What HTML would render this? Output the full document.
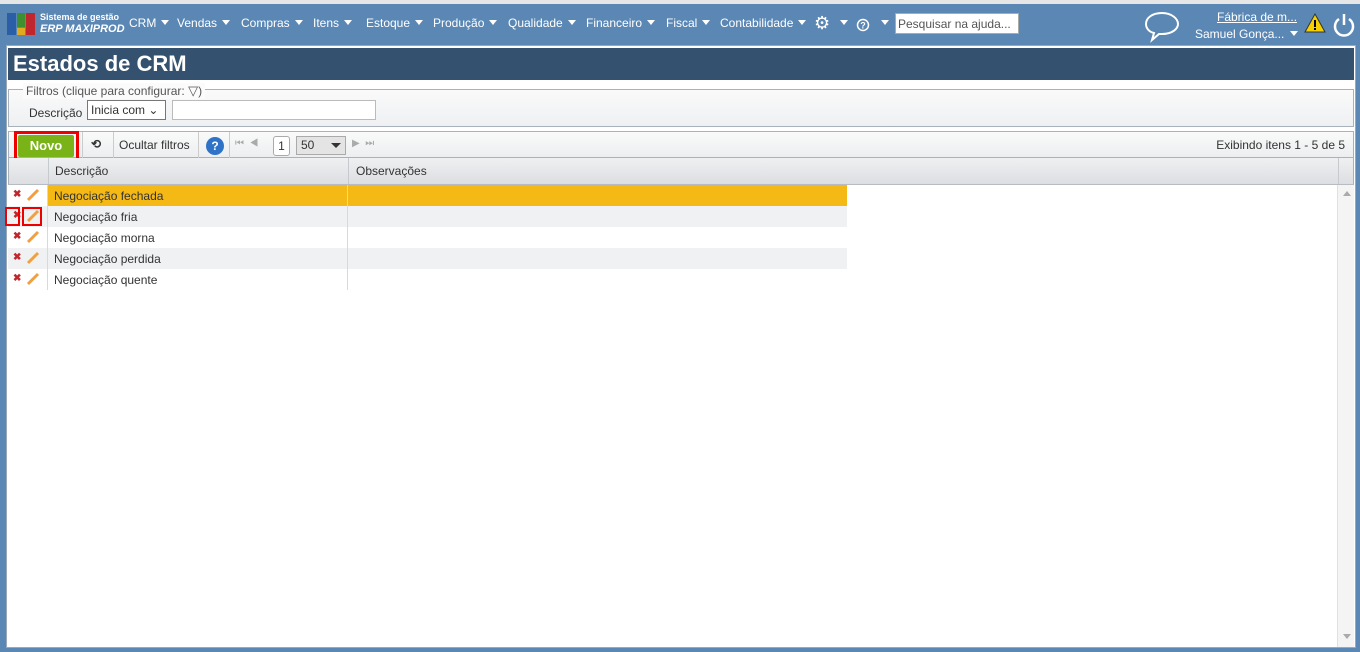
<!DOCTYPE html>
<html><head><meta charset="utf-8"><style>
*{box-sizing:border-box;margin:0;padding:0}
body{width:1360px;height:652px;background:#5b87b4;font-family:"Liberation Sans",sans-serif;font-size:12px;color:#333;position:relative;overflow:hidden}
.top{position:absolute;left:0;top:0;width:1360px;height:4px;background:#e6e6e6}
.bar{position:absolute;left:0;top:4px;width:1360px;height:40px;background:#5b87b4;color:#fff}
.n{position:absolute;top:12px;font-size:12px;color:#fff;white-space:nowrap}
.tri{display:inline-block;width:0;height:0;border-left:4px solid transparent;border-right:4px solid transparent;border-top:5px solid #fff;vertical-align:2px;margin-left:5px}
.panel{position:absolute;left:6px;top:45px;width:1350px;height:603px;background:#fff;border:1px solid #9aa8b8}
.title{position:absolute;left:1px;top:2px;width:1346px;height:32px;background:#34526f;color:#fff;font-weight:bold;font-size:22px;padding:3px 5px}
.fs{position:absolute;left:1px;top:43px;width:1346px;height:38px;border:1px solid #a9b1bb;background:linear-gradient(#fafafa,#eef0f2)}
.tb{position:absolute;left:1px;top:85px;width:1346px;height:27px;border:1px solid #a9b1bb;background:linear-gradient(#fafafa,#eceef0)}
.gh{position:absolute;left:1px;top:112px;width:1346px;height:27px;background:linear-gradient(#eef0f2,#dcdee1);border-bottom:1px solid #b7bcc2;border-left:1px solid #a9b1bb;border-right:1px solid #a9b1bb}
.row{position:absolute;left:1px;width:839px;height:21px}
.row .t{position:absolute;left:46px;top:4px}
.x{position:absolute;left:5px;top:4px;color:#c0262d;font-weight:bold;font-size:10px}
.p{position:absolute;left:18px;top:3px}
.vl{position:absolute;width:1px;background:#d6d9dd}
</style></head><body>
<div class="top"></div>
<div class="bar">
 <div style="position:absolute;left:7px;top:9px;width:9px;height:22px;background:#2a5fa8"></div>
 <div style="position:absolute;left:17px;top:9px;width:8px;height:14px;background:#3e8f2f"></div>
 <div style="position:absolute;left:17px;top:24px;width:8px;height:7px;background:#e0a91e"></div>
 <div style="position:absolute;left:26px;top:9px;width:9px;height:22px;background:#c0262d"></div>
 <div style="position:absolute;left:40px;top:8px;font-size:9px;font-weight:bold">Sistema de gestão</div>
 <div style="position:absolute;left:40px;top:19px;font-size:11px;font-weight:bold;font-style:italic">ERP MAXIPROD</div>
 <span class="n" style="left:129px">CRM<i class="tri"></i></span>
 <span class="n" style="left:177px">Vendas<i class="tri"></i></span>
 <span class="n" style="left:241px">Compras<i class="tri"></i></span>
 <span class="n" style="left:313px">Itens<i class="tri"></i></span>
 <span class="n" style="left:366px">Estoque<i class="tri"></i></span>
 <span class="n" style="left:433px">Produção<i class="tri"></i></span>
 <span class="n" style="left:508px">Qualidade<i class="tri"></i></span>
 <span class="n" style="left:586px">Financeiro<i class="tri"></i></span>
 <span class="n" style="left:666px">Fiscal<i class="tri"></i></span>
 <span class="n" style="left:720px">Contabilidade<i class="tri"></i></span>
 <span class="n" style="left:814px;top:9px;font-size:18px">⚙</span><i class="tri" style="position:absolute;left:835px;top:16px"></i>
 <svg style="position:absolute;left:856px;top:14px" width="14" height="14"><circle cx="7" cy="7" r="5.5" fill="none" stroke="#fff" stroke-width="1.5"/><text x="7" y="10.5" font-size="9" font-weight="bold" fill="#fff" text-anchor="middle" font-family="Liberation Sans">?</text></svg>
 <i class="tri" style="position:absolute;left:876px;top:16px"></i>
 <div style="position:absolute;left:895px;top:9px;width:124px;height:21px;background:#fff;border:1px solid #aaa;color:#555;padding:3px 2px;font-size:12px">Pesquisar na ajuda...</div>
 <svg style="position:absolute;left:1143px;top:6px" width="38" height="34" viewBox="0 0 38 34"><path d="M19 3C9 3 3 8 3 14c0 4 3 8 8 9l-2 7 7-6c1 0 2 0 3 0 10 0 16-5 16-10S29 3 19 3z" fill="none" stroke="#fff" stroke-width="2"/></svg>
 <div style="position:absolute;left:1217px;top:6px;text-decoration:underline">Fábrica de m...</div>
 <div style="position:absolute;left:1195px;top:23px">Samuel Gonça...<i class="tri" style="margin-left:6px"></i></div>
 <svg style="position:absolute;left:1304px;top:8px" width="22" height="22"><path d="M11 2L21 20H1z" fill="#f5d000" stroke="#333" stroke-width="1"/><rect x="10" y="8" width="2" height="7" fill="#000"/><rect x="10" y="16" width="2" height="2" fill="#000"/></svg>
 <svg style="position:absolute;left:1332px;top:8px" width="24" height="26"><path d="M7 7a9 9 0 1 0 10 0" fill="none" stroke="#fff" stroke-width="2.5"/><path d="M12 2v11" stroke="#fff" stroke-width="2.5"/></svg>
</div>
<div class="panel">
 <div class="title">Estados de CRM</div>
 <div class="fs">
  <div style="position:absolute;left:14px;top:-7px;background:#fbfbfb;padding:0 3px;color:#555">Filtros (clique para configurar: <span style="font-size:13px">▽</span>)</div>
  <div style="position:absolute;left:20px;top:16px">Descrição</div>
  <div style="position:absolute;left:78px;top:10px;width:79px;height:20px;border:1px solid #777;background:#fff;padding:2px 3px">Inicia com ⌄</div>
  <div style="position:absolute;left:163px;top:10px;width:204px;height:20px;border:1px solid #bbb;background:#fff"></div>
 </div>
 <div class="tb">
  <div style="position:absolute;left:5px;top:-1px;width:65px;height:31px;border:3px solid #e00"></div>
  <div style="position:absolute;left:9px;top:3px;width:56px;height:22px;background:#7ab317;color:#fff;font-weight:bold;font-size:13px;text-align:center;line-height:22px;border-radius:2px">Novo</div>
  <div class="vl" style="left:73px;top:0;height:26px;background:#ccc"></div>
  <div style="position:absolute;left:82px;top:5px;font-weight:bold">⟲</div>
  <div class="vl" style="left:104px;top:0;height:26px;background:#ccc"></div>
  <div style="position:absolute;left:110px;top:6px">Ocultar filtros</div>
  <div class="vl" style="left:189px;top:0;height:26px;background:#ccc"></div>
  <div style="position:absolute;left:197px;top:5px;width:18px;height:18px;border-radius:50%;background:#2f73c8;color:#fff;font-weight:bold;text-align:center;line-height:18px">?</div>
  <div class="vl" style="left:220px;top:0;height:26px;background:#ccc"></div>
  <div style="position:absolute;left:226px;top:6px;color:#aaa;font-size:10px">⏮ &nbsp;◀</div>
  <div style="position:absolute;left:264px;top:4px;width:17px;height:20px;border:1px solid #aaa;border-radius:3px;background:#fff;text-align:center;line-height:18px">1</div>
  <div style="position:absolute;left:287px;top:4px;width:50px;height:19px;border:1px solid #aaa;background:#e4e4e4;padding:1px 4px">50 <span style="position:absolute;right:4px;top:6px;border-left:5px solid transparent;border-right:5px solid transparent;border-top:5px solid #333"></span></div>
  <div style="position:absolute;left:343px;top:6px;color:#aaa;font-size:10px">▶ &nbsp;⏭</div>
  <div style="position:absolute;right:8px;top:6px">Exibindo itens 1 - 5 de 5</div>
 </div>
 <div class="gh">
  <div style="position:absolute;left:46px;top:6px">Descrição</div>
  <div style="position:absolute;left:347px;top:6px">Observações</div>
  <div class="vl" style="left:39px;top:0;height:26px;background:#c6c9cd"></div>
  <div class="vl" style="left:339px;top:0;height:26px;background:#c6c9cd"></div>
  <div class="vl" style="left:1329px;top:0;height:26px;background:#c6c9cd"></div>
 </div>
 <div style="position:absolute;left:1330px;top:139px;width:17px;height:462px;background:#f4f4f4;border-left:1px solid #e0e0e0"><div style="position:absolute;left:5px;top:6px;border-left:4px solid transparent;border-right:4px solid transparent;border-bottom:5px solid #aaa"></div><div style="position:absolute;left:5px;bottom:8px;border-left:4px solid transparent;border-right:4px solid transparent;border-top:5px solid #aaa"></div></div>
 <div class="row" style="top:139px;background:#f4b915"><div style="position:absolute;left:0;width:39px;height:21px;background:#fff"></div><span class="x">✖</span><svg class="p" width="14" height="14"><path d="M2 12L12 2" stroke="#f0a040" stroke-width="3"/></svg><span class="t">Negociação fechada</span></div>
 <div class="row" style="top:160px;background:#eff1f3"><span class="x">✖</span><svg class="p" width="14" height="14"><path d="M2 12L12 2" stroke="#f0a040" stroke-width="3"/></svg><span class="t">Negociação fria</span>
  <div style="position:absolute;left:-3px;top:1px;width:15px;height:19px;border:2px solid #e00"></div><div style="position:absolute;left:14px;top:1px;width:20px;height:19px;border:2px solid #e00"></div></div>
 <div class="row" style="top:181px"><span class="x">✖</span><svg class="p" width="14" height="14"><path d="M2 12L12 2" stroke="#f0a040" stroke-width="3"/></svg><span class="t">Negociação morna</span></div>
 <div class="row" style="top:202px;background:#eff1f3"><span class="x">✖</span><svg class="p" width="14" height="14"><path d="M2 12L12 2" stroke="#f0a040" stroke-width="3"/></svg><span class="t">Negociação perdida</span></div>
 <div class="row" style="top:223px"><span class="x">✖</span><svg class="p" width="14" height="14"><path d="M2 12L12 2" stroke="#f0a040" stroke-width="3"/></svg><span class="t">Negociação quente</span></div>
 <div class="vl" style="left:40px;top:139px;height:105px"></div>
 <div class="vl" style="left:340px;top:139px;height:105px"></div>
</div>
</body></html>
